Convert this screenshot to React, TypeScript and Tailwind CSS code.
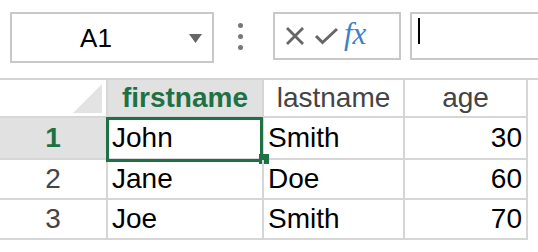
import React from 'react'

const rows = [
  { first: 'John', last: 'Smith', age: 30 },
  { first: 'Jane', last: 'Doe', age: 60 },
  { first: 'Joe', last: 'Smith', age: 70 },
]

export default function App() {
  return (
    <div className="w-[538px] h-[252px] bg-white overflow-hidden text-[28px] text-black"
      style={{ fontFamily: '"Liberation Sans", Arial, sans-serif' }}>
      {/* Toolbar: name box, menu dots, formula buttons, input */}
      <div className="h-[80px] border-b-2 border-[#d3d3d3] flex items-start pt-[12px]">
        <div className="ml-[10px] w-[204px] h-[51px] border-2 border-[#c8c8c8] flex items-center relative">
          <span className="w-[168px] text-center leading-none text-[26px]">A1</span>
          <svg className="absolute left-[177px] top-[20px]" width="13" height="9" viewBox="0 0 13 9">
            <path d="M0 0h13L6.5 9z" fill="#666" />
          </svg>
        </div>
        <div className="ml-[24px] mt-[11px] flex flex-col gap-[6px]">
          <span className="w-[5px] h-[5px] rounded-full bg-[#777]" />
          <span className="w-[5px] h-[5px] rounded-full bg-[#777]" />
          <span className="w-[5px] h-[5px] rounded-full bg-[#777]" />
        </div>
        <div className="ml-[30px] w-[128px] h-[48px] border-2 border-[#c8c8c8] flex items-center pl-[11px]">
          <svg width="18" height="18" viewBox="0 0 18 18">
            <path d="M1 1l16 16M17 1L1 17" stroke="#666" strokeWidth="2.8" fill="none" />
          </svg>
          <svg className="ml-[10px]" width="25" height="18" viewBox="0 0 25 18">
            <path d="M2 9l6.5 6.5L23 2" stroke="#666" strokeWidth="3" fill="none" />
          </svg>
          <span className="ml-[5px] italic text-[#3c7fc8] text-[31px] leading-none -mt-[6px]"
            style={{ fontFamily: '"Liberation Serif", "Times New Roman", serif' }}>fx</span>
        </div>
        <div className="ml-[9px] flex-1 h-[48px] border-2 border-r-0 border-[#c8c8c8] pl-[6px] pt-[4px]">
          <div className="w-[2px] h-[26px] bg-black" />
        </div>
      </div>

      {/* Grid */}
      <div className="grid grid-cols-[108px_156px_141px_123px]">
        {/* Header row */}
        <div className="h-[38px] border-b-2 border-r-2 border-[#d6d6d6] relative">
          <svg className="absolute left-[73px] top-[4px]" width="29" height="29" viewBox="0 0 29 29">
            <path d="M29 0v29H0z" fill="#e3e3e3" />
          </svg>
        </div>
        <div className="h-[38px] border-b-2 border-r-2 border-[#d6d6d6] bg-[#e1e1e1] flex items-center justify-center font-bold text-[#1e7145] pb-[1px]">firstname</div>
        <div className="h-[38px] border-b-2 border-r-2 border-[#d6d6d6] flex items-center justify-center text-[#444] pb-[1px]">lastname</div>
        <div className="h-[38px] border-b-2 border-r-2 border-[#d6d6d6] flex items-center justify-center text-[#444] pb-[1px]">age</div>

        {rows.map((r, i) => {
          const h = i === 0 ? 'h-[42px]' : 'h-[40px]'
          const sel = i === 0
          return (
            <React.Fragment key={i}>
              <div className={`${h} border-b-2 border-r-2 border-[#d6d6d6] flex items-center justify-center ${sel ? 'bg-[#e1e1e1] font-bold text-[#1e7145]' : 'text-[#444]'}`}>
                {i + 1}
              </div>
              <div className={`${h} border-b-2 border-r-2 border-[#d6d6d6] flex items-center pl-[4px] relative`}>
                {sel && (
                  <>
                    <div className="absolute -left-[2px] -top-[1px] w-[157px] h-[45px] border-[3px] border-[#1e7145]" />
                    <div className="absolute left-[151px] top-[36px] w-[10px] h-[10px] bg-[#1e7145]" />
                  </>
                )}
                {r.first}
              </div>
              <div className={`${h} border-b-2 border-r-2 border-[#d6d6d6] flex items-center pl-[4px]`}>{r.last}</div>
              <div className={`${h} border-b-2 border-r-2 border-[#d6d6d6] flex items-center justify-end pr-[4px]`}>{r.age}</div>
            </React.Fragment>
          )
        })}
      </div>
    </div>
  )
}
